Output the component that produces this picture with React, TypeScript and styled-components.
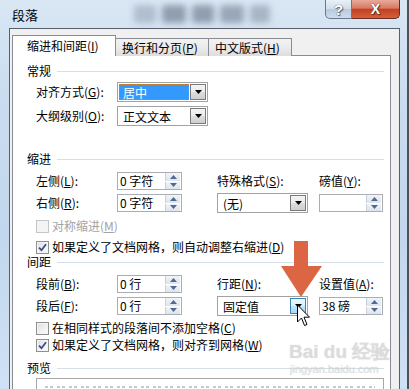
import React from 'react';
import styled, { createGlobalStyle } from 'styled-components';

const GlobalStyle = createGlobalStyle`
  html, body {
    margin: 0;
    padding: 0;
    overflow: hidden;
  }
  body {
    font-family: "Noto Sans CJK SC", "Noto Sans", sans-serif;
    font-size: 12px;
    color: #000;
  }
`;

const Window = styled.div`
  position: relative;
  width: 409px;
  height: 389px;
  box-sizing: border-box;
  overflow: hidden;
  border-right: 2px solid #4a525b;
  background: linear-gradient(180deg, #d9e7f4 0%, #cadcef 25%, #c2d7ed 60%, #cfe1f4 100%);
  display: flex;
  flex-direction: column;
`;

const TitleBar = styled.div`
  height: 28px;
  flex-shrink: 0;
  display: flex;
  align-items: flex-start;
  padding-left: 12px;
`;

const Title = styled.div`
  margin-top: 7px;
  font-size: 13px;
  line-height: 16px;
`;

// blurred shapes seen through the aero glass
const GlassGhost = styled.div`
  display: flex;
  gap: 6px;
  margin: 5px 0 0 96px;
  filter: blur(3px);
`;

const GhostBlob = styled.div<{ $w: number; $o: number }>`
  width: ${p => p.$w}px;
  height: 18px;
  border-radius: 3px;
  background: rgba(60, 72, 94, ${p => p.$o});
`;

const CaptionButtons = styled.div`
  margin-left: auto;
  margin-right: 7px;
  display: flex;
`;

const CaptionButton = styled.div<{ $close?: boolean }>`
  width: ${p => (p.$close ? 48 : 27)}px;
  height: 19px;
  box-sizing: border-box;
  border: 1px solid ${p => (p.$close ? '#6b2b20' : '#6a7889')};
  border-top: none;
  border-left: ${p => (p.$close ? 'none' : '1px solid #6a7889')};
  border-radius: ${p => (p.$close ? '0 0 5px 0' : '0 0 0 5px')};
  background: ${p =>
    p.$close
      ? 'linear-gradient(180deg, #eaa999 0%, #d97a63 45%, #c4411f 52%, #d2603f 100%)'
      : 'linear-gradient(180deg, #e9f0f7 0%, #d2deea 48%, #b9cadd 52%, #cddced 100%)'};
  display: flex;
  align-items: center;
  justify-content: center;
  font-family: "Liberation Sans", sans-serif;
  font-weight: bold;
  font-size: ${p => (p.$close ? 14 : 15)}px;
  color: #fff;
  text-shadow: 0 0 1px #2a2a2a, 1px 1px 1px rgba(0, 0, 0, 0.5);
`;

const Client = styled.div`
  flex: 1;
  margin: 0 7px 0 9px;
  border: 1px solid #56606b;
  border-bottom: none;
  background: #f0f0f0;
  padding: 6px 8px 0 2px;
  display: flex;
  flex-direction: column;
  min-height: 0;
`;

const TabRow = styled.div`
  display: flex;
  align-items: flex-end;
  height: 21px;
  margin-bottom: -1px;
  position: relative;
  z-index: 1;
`;

const Tab = styled.div<{ $w: number; $active?: boolean }>`
  width: ${p => p.$w}px;
  height: ${p => (p.$active ? 21 : 18)}px;
  box-sizing: border-box;
  border: 1px solid #898c95;
  border-bottom: none;
  margin-left: ${p => (p.$active ? 0 : -1)}px;
  background: ${p => (p.$active ? '#fff' : 'linear-gradient(180deg, #f2f2f2 0%, #ebebeb 50%, #dddddd 100%)')};
  padding-left: ${p => (p.$active ? 14 : 6)}px;
  font-size: 12px;
  line-height: ${p => (p.$active ? 20 : 17)}px;
  white-space: nowrap;
`;

const Panel = styled.div`
  flex: 1;
  border: 1px solid #898c95;
  background: #fff;
  padding: 8px 6px 0 14px;
`;

const SectionHead = styled.div<{ $mt?: number }>`
  display: flex;
  align-items: center;
  height: 14px;
  gap: 6px;
  margin-top: ${p => p.$mt ?? 0}px;
  line-height: 14px;
`;

const SectionLine = styled.div`
  flex: 1;
  height: 1px;
  background: #d5dfe6;
`;

const FieldRow = styled.div<{ $mt?: number }>`
  display: grid;
  grid-template-columns: 81px 100px 102px 64px;
  align-items: center;
  height: 20px;
  margin: ${p => p.$mt ?? 0}px 0 0 9px;
`;

const Label = styled.div<{ $disabled?: boolean }>`
  line-height: 14px;
  white-space: nowrap;
  color: ${p => (p.$disabled ? '#a3a3a3' : '#000')};
`;

const Mn = styled.span`
  text-decoration: underline;
`;

const Combo = styled.div<{ $w: number }>`
  width: ${p => p.$w}px;
  height: 20px;
  box-sizing: border-box;
  border: 1px solid #a2a2a2;
  background: #fff;
  padding: 1px;
  display: flex;
`;

const ComboValue = styled.div<{ $selected?: boolean }>`
  flex: 1;
  box-sizing: border-box;
  padding-left: 3px;
  margin-right: 1px;
  line-height: 15px;
  white-space: nowrap;
  background: ${p => (p.$selected ? '#3399ff' : 'transparent')};
  color: ${p => (p.$selected ? '#fff' : '#000')};
  border: 1px ${p => (p.$selected ? 'dotted #c8853a' : 'solid transparent')};
`;

const DropButton = styled.div<{ $hot?: boolean }>`
  width: 16px;
  box-sizing: border-box;
  border: 1px solid ${p => (p.$hot ? '#3c7fb1' : '#7b7b7b')};
  background: ${p =>
    p.$hot
      ? 'linear-gradient(180deg, #eaf6fd 0%, #d9f0fc 50%, #bee6fd 51%, #a7d9f5 100%)'
      : 'linear-gradient(180deg, #f4f4f4 0%, #ebebeb 50%, #dddddd 51%, #cfcfcf 100%)'};
  display: flex;
  align-items: center;
  justify-content: center;
`;

const SpinBox = styled.div<{ $w: number }>`
  width: ${p => p.$w}px;
  height: 18px;
  box-sizing: border-box;
  border: 1px solid #abadb3;
  background: #fff;
  display: flex;
`;

const SpinText = styled.div`
  flex: 1;
  padding-left: 2px;
  line-height: 16px;
  white-space: pre;
`;

const SpinButtons = styled.div`
  width: 15px;
  margin: 0 1px 0 0;
  display: flex;
  flex-direction: column;
  gap: 1px;
`;

const SpinHalf = styled.div`
  flex: 1;
  display: flex;
  align-items: center;
  justify-content: center;
  background: linear-gradient(180deg, #f1f4f8 0%, #dde4ec 100%);
  border-left: 1px solid #c9d2dc;
`;

const CheckRow = styled.div<{ $mt?: number }>`
  display: flex;
  align-items: center;
  gap: 3px;
  height: 16px;
  margin: ${p => p.$mt ?? 0}px 0 0 9px;
`;

const CheckBox = styled.div<{ $disabled?: boolean }>`
  width: 13px;
  height: 13px;
  box-sizing: border-box;
  border: 1px solid ${p => (p.$disabled ? '#c5c5c5' : '#8e8f8f')};
  background: ${p =>
    p.$disabled ? '#f4f4f4' : 'linear-gradient(135deg, #dcdcdc 0%, #f2f2f2 60%, #fafafa 100%)'};
  box-shadow: inset 0 0 0 1px ${p => (p.$disabled ? '#f4f4f4' : '#f5f5f5')};
  display: flex;
  align-items: center;
  justify-content: center;
`;

const PreviewBox = styled.div`
  margin: 3px 0 0 9px;
  height: 30px;
  border: 1px solid #a7a7a7;
  background: #fff;
  padding: 7px 8px 0;
`;

// tiny grey "previous paragraph" sample line
const PreviewLine = styled.div`
  height: 2px;
  background: repeating-linear-gradient(90deg, #c8c8c8 0 3px, transparent 3px 5px, #c8c8c8 5px 8px, transparent 8px 12px);
`;

const Watermark = styled.div`
  position: absolute;
  left: 289px;
  top: 340px;
  font-family: "Liberation Sans", sans-serif;
  color: rgba(226, 226, 226, 0.6);
  text-shadow: 0 0 1px rgba(150, 150, 150, 0.45);
  pointer-events: none;
  white-space: nowrap;
`;

const WatermarkBrand = styled.div`
  font-size: 19px;
  font-weight: bold;
  line-height: 23px;
`;

const WatermarkSite = styled.div`
  font-size: 11px;
  line-height: 12px;
  padding-left: 1px;
`;

const Overlay = styled.svg<{ $x: number; $y: number }>`
  position: absolute;
  left: ${p => p.$x}px;
  top: ${p => p.$y}px;
  pointer-events: none;
`;

const Triangle = () => (
  <svg width="7" height="4" viewBox="0 0 7 4">
    <path d="M0 0 H7 L3.5 4 Z" fill="#000" />
  </svg>
);

const Spin: React.FC<{ w: number; text?: string }> = ({ w, text = '' }) => (
  <SpinBox $w={w}>
    <SpinText>{text}</SpinText>
    <SpinButtons>
      <SpinHalf>
        <svg width="7" height="4" viewBox="0 0 7 4">
          <path d="M0 4 H7 L3.5 0 Z" fill="#4f6a98" />
        </svg>
      </SpinHalf>
      <SpinHalf>
        <svg width="7" height="4" viewBox="0 0 7 4">
          <path d="M0 0 H7 L3.5 4 Z" fill="#4f6a98" />
        </svg>
      </SpinHalf>
    </SpinButtons>
  </SpinBox>
);

const Check: React.FC<{ checked?: boolean; disabled?: boolean; children: React.ReactNode }> = ({
  checked,
  disabled,
  children,
}) => (
  <>
    <CheckBox $disabled={disabled}>
      {checked && (
        <svg width="9" height="9" viewBox="0 0 9 9">
          <path d="M1 4.6 L3.5 7.2 L8 1.2" stroke="#33488a" strokeWidth="1.7" fill="none" />
        </svg>
      )}
    </CheckBox>
    <Label $disabled={disabled}>{children}</Label>
  </>
);

export default function App() {
  return (
    <Window>
      <GlobalStyle />
      <TitleBar>
        <Title>段落</Title>
        <GlassGhost>
          <GhostBlob $w={22} $o={0.25} />
          <GhostBlob $w={24} $o={0.45} />
          <GhostBlob $w={22} $o={0.45} />
          <GhostBlob $w={24} $o={0.4} />
          <GhostBlob $w={20} $o={0.3} />
        </GlassGhost>
        <CaptionButtons>
          <CaptionButton>?</CaptionButton>
          <CaptionButton $close>X</CaptionButton>
        </CaptionButtons>
      </TitleBar>

      <Client>
        <TabRow>
          <Tab $w={104} $active>
            缩进和间距(<Mn>I</Mn>)
          </Tab>
          <Tab $w={94}>
            换行和分页(<Mn>P</Mn>)
          </Tab>
          <Tab $w={84}>
            中文版式(<Mn>H</Mn>)
          </Tab>
        </TabRow>

        <Panel>
          <SectionHead>
            常规
            <SectionLine />
          </SectionHead>
          <FieldRow $mt={4}>
            <Label>
              对齐方式(<Mn>G</Mn>):
            </Label>
            <Combo $w={91}>
              <ComboValue $selected>居中</ComboValue>
              <DropButton>
                <Triangle />
              </DropButton>
            </Combo>
          </FieldRow>
          <FieldRow $mt={4}>
            <Label>
              大纲级别(<Mn>O</Mn>):
            </Label>
            <Combo $w={91}>
              <ComboValue>正文文本</ComboValue>
              <DropButton>
                <Triangle />
              </DropButton>
            </Combo>
          </FieldRow>

          <SectionHead $mt={26}>
            缩进
            <SectionLine />
          </SectionHead>
          <FieldRow $mt={5}>
            <Label>
              左侧(<Mn>L</Mn>):
            </Label>
            <Spin w={65} text="0 字符" />
            <Label>
              特殊格式(<Mn>S</Mn>):
            </Label>
            <Label>
              磅值(<Mn>Y</Mn>):
            </Label>
          </FieldRow>
          <FieldRow $mt={2}>
            <Label>
              右侧(<Mn>R</Mn>):
            </Label>
            <Spin w={65} text="0 字符" />
            <Combo $w={91}>
              <ComboValue>(无)</ComboValue>
              <DropButton>
                <Triangle />
              </DropButton>
            </Combo>
            <Spin w={64} />
          </FieldRow>
          <CheckRow $mt={5}>
            <Check disabled>
              对称缩进(<Mn>M</Mn>)
            </Check>
          </CheckRow>
          <CheckRow $mt={5}>
            <Check checked>
              如果定义了文档网格，则自动调整右缩进(<Mn>D</Mn>)
            </Check>
          </CheckRow>

          <SectionHead>
            间距
            <SectionLine />
          </SectionHead>
          <FieldRow $mt={5}>
            <Label>
              段前(<Mn>B</Mn>):
            </Label>
            <Spin w={65} text="0 行" />
            <Label>
              行距(<Mn>N</Mn>):
            </Label>
            <Label>
              设置值(<Mn>A</Mn>):
            </Label>
          </FieldRow>
          <FieldRow $mt={2}>
            <Label>
              段后(<Mn>F</Mn>):
            </Label>
            <Spin w={65} text="0 行" />
            <Combo $w={91}>
              <ComboValue>固定值</ComboValue>
              <DropButton $hot>
                <Triangle />
              </DropButton>
            </Combo>
            <Spin w={64} text="38 磅" />
          </FieldRow>
          <CheckRow $mt={4}>
            <Check>
              在相同样式的段落间不添加空格(<Mn>C</Mn>)
            </Check>
          </CheckRow>
          <CheckRow $mt={1}>
            <Check checked>
              如果定义了文档网格，则对齐到网格(<Mn>W</Mn>)
            </Check>
          </CheckRow>

          <SectionHead $mt={8}>
            预览
            <SectionLine />
          </SectionHead>
          <PreviewBox>
            <PreviewLine />
          </PreviewBox>
        </Panel>
      </Client>

      <Watermark>
        <WatermarkBrand>Bai du 经验</WatermarkBrand>
        <WatermarkSite>jingyan.baidu.com</WatermarkSite>
      </Watermark>

      <Overlay $x={281} $y={241} width="42" height="57" viewBox="0 0 42 57">
        <path d="M13 0 H27 V25 H41 L20 56 L0 25 H13 Z" fill="#dc6544" />
      </Overlay>

      <Overlay $x={296} $y={304} width="16" height="24" viewBox="0 0 16 24">
        <path
          d="M1.5 1 V18 L5.5 14 L8.5 21.5 L11 20.5 L8 13.2 L13.5 13.2 Z"
          fill="#fff"
          stroke="#000"
          strokeWidth="1"
          strokeLinejoin="round"
        />
      </Overlay>
    </Window>
  );
}
